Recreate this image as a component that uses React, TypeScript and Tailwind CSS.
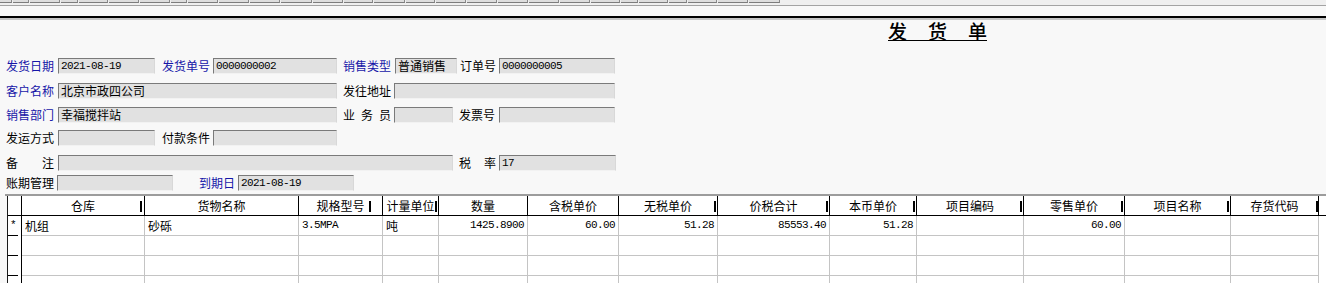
import React from 'react';

const CJK = "font-['Noto_Sans_CJK_SC',sans-serif]";
const MONO = "font-['Liberation_Mono',monospace] text-[11px] tracking-[-0.6px]";

// toolbar button widths (only the bottom edge of the toolbar is visible)
const toolButtons = [
  'w-[12px]', 'w-[16px]', 'w-[30px]', 'w-[17px]', 'w-[29px]', 'w-[30px]', 'w-[30px]', 'w-[16px]',
  'w-[30px]', 'w-[30px]', 'w-[30px]', 'w-[31px]', 'w-[30px]', 'w-[29px]', 'w-[31px]', 'w-[29px]',
  'w-[30px]', 'w-[30px]', 'w-[30px]', 'w-[30px]', 'w-[30px]', 'w-[29px]', 'w-[17px]', 'w-[29px]',
  'w-[18px]', 'w-[29px]', 'w-[30px]', 'w-[31px]',
];

type Col = { title: string; w: string; mark?: string };

const columns: Col[] = [
  { title: '仓库', w: 'w-[123px]', mark: 'right-[2px]' },
  { title: '货物名称', w: 'w-[154px]' },
  { title: '规格型号', w: 'w-[84px]', mark: 'right-[11px]' },
  { title: '计量单位', w: 'w-[56px]', mark: 'right-[1px]' },
  { title: '数量', w: 'w-[89px]' },
  { title: '含税单价', w: 'w-[91px]' },
  { title: '无税单价', w: 'w-[99px]', mark: 'right-[1px]' },
  { title: '价税合计', w: 'w-[112px]', mark: 'right-[1px]' },
  { title: '本币单价', w: 'w-[87px]', mark: 'right-[1px]' },
  { title: '项目编码', w: 'w-[107px]', mark: 'right-[1px]' },
  { title: '零售单价', w: 'w-[101px]', mark: 'right-[1px]' },
  { title: '项目名称', w: 'w-[106px]', mark: 'right-[1px]' },
  { title: '存货代码', w: 'w-[88px]', mark: 'right-[0px]' },
];

// first data row: [text, right aligned]
const firstRow: [string, boolean][] = [
  ['机组', false],
  ['砂砾', false],
  ['3.5MPA', false],
  ['吨', false],
  ['1425.8900', true],
  ['60.00', true],
  ['51.28', true],
  ['85553.40', true],
  ['51.28', true],
  ['', true],
  ['60.00', true],
  ['', false],
  ['', false],
];

function Label({ text, blue, className = '' }: { text: string; blue?: boolean; className?: string }) {
  return (
    <span
      className={`${CJK} text-[12px] leading-none whitespace-nowrap ${blue ? 'text-[#1616a8]' : 'text-black'} ${className}`}
    >
      {text}
    </span>
  );
}

function Box({ className = '', value, mono }: { className?: string; value?: string; mono?: boolean }) {
  return (
    <div
      className={`h-[16px] shrink-0 bg-[#e1e1e1] border border-t-[#7a7a7a] border-l-[#7a7a7a] border-r-[#d8d8d8] border-b-[#f2f2f2] flex items-center pl-[2px] overflow-hidden whitespace-nowrap text-black leading-none ${className}`}
    >
      {value && <span className={mono ? MONO : `${CJK} text-[12px]`}>{value}</span>}
    </div>
  );
}

export default function App() {
  return (
    <div className="w-[1326px] h-[283px] overflow-hidden bg-[#f8f8f8]">
      {/* toolbar remnant */}
      <div className="h-[5px] bg-[#efefef] flex items-start">
        {toolButtons.map((w, i) => (
          <div key={i} className={`${w} h-[3px] bg-[#dedede] border-b border-r border-b-[#7d7d7d] border-r-[#8a8a8a] mr-[1px]`} />
        ))}
      </div>
      <div className="h-px bg-[#a3a3a3]" />
      <div className="h-[10px]" />
      <div className="h-[2px] bg-black" />
      <div className="h-[2px] bg-[#c4c4c4]" />

      {/* title */}
      <div className="flex pl-[888px] pt-[1px]">
        <div className={`${CJK} flex gap-[21px] text-[19px] leading-[19px] font-medium text-black border-b border-black`}>
          <span>发</span>
          <span>货</span>
          <span>单</span>
        </div>
      </div>

      {/* form */}
      <div className="flex items-center h-[16px] mt-[17px]">
        <Label text="发货日期" blue className="ml-[6px] w-[52px]" />
        <Box className="w-[97px]" value="2021-08-19" mono />
        <Label text="发货单号" blue className="ml-[7px] w-[51px]" />
        <Box className="w-[124px]" value="0000000002" mono />
        <Label text="销售类型" blue className="ml-[6px] w-[52px]" />
        <Box className="w-[62px]" value="普通销售" />
        <Label text="订单号" className="ml-[3px] w-[39px]" />
        <Box className="w-[116px]" value="0000000005" mono />
      </div>

      <div className="flex items-center h-[16px] mt-[9px]">
        <Label text="客户名称" blue className="ml-[6px] w-[52px]" />
        <Box className="w-[279px]" value="北京市政四公司" />
        <Label text="发往地址" className="ml-[6px] w-[51px]" />
        <Box className="w-[221px]" />
      </div>

      <div className="flex items-center h-[16px] mt-[8px]">
        <Label text="销售部门" blue className="ml-[6px] w-[52px]" />
        <Box className="w-[279px]" value="幸福搅拌站" />
        <div className={`${CJK} ml-[6px] w-[51px] pr-[3px] flex justify-between text-[12px] leading-none text-black`}>
          <span>业</span>
          <span>务</span>
          <span>员</span>
        </div>
        <Box className="w-[59px]" />
        <Label text="发票号" className="ml-[6px] w-[40px]" />
        <Box className="w-[116px]" />
      </div>

      <div className="flex items-center h-[16px] mt-[7px]">
        <Label text="发运方式" className="ml-[6px] w-[52px]" />
        <Box className="w-[97px]" />
        <Label text="付款条件" className="ml-[7px] w-[51px]" />
        <Box className="w-[124px]" />
      </div>

      <div className="flex items-center h-[16px] mt-[9px]">
        <div className={`${CJK} ml-[6px] w-[52px] pr-[4px] flex justify-between text-[12px] leading-none text-black`}>
          <span>备</span>
          <span>注</span>
        </div>
        <Box className="w-[395px]" />
        <div className={`${CJK} ml-[6px] w-[40px] pr-[3px] flex justify-between text-[12px] leading-none text-black`}>
          <span>税</span>
          <span>率</span>
        </div>
        <Box className="w-[117px]" value="17" mono />
      </div>

      <div className="flex items-center h-[16px] mt-[4px]">
        <Label text="账期管理" className="ml-[6px] w-[51px]" />
        <Box className="w-[116px]" />
        <Label text="到期日" blue className="ml-[26px] w-[39px]" />
        <Box className="w-[116px]" value="2021-08-19" mono />
      </div>

      {/* grid */}
      <div className="mt-[3px] ml-[5px] border-t-2 border-t-[#9c9c9c] pl-[2px] h-[100px]">
        <div className="h-full bg-white border-l border-l-[#1a1a1a] overflow-hidden">
          {/* header */}
          <div className="flex h-[20px] border-b border-b-black">
            <div className="w-[14px] shrink-0 border-r border-r-black" />
            {columns.map((c) => (
              <div
                key={c.title}
                className={`${c.w} shrink-0 relative border-r border-r-black flex items-center justify-center ${CJK} text-[12px] leading-none text-black`}
              >
                {c.title}
                {c.mark && <span className={`absolute ${c.mark} top-[5px] h-[11px] w-[2px] bg-black`} />}
              </div>
            ))}
          </div>

          {/* data rows */}
          {[0, 1, 2, 3].map((r) => (
            <div key={r} className="flex h-[20px]">
              <div className="w-[14px] shrink-0 border-r border-r-black flex flex-col">
                <div className="flex-1 flex items-center pl-[2px] font-['Liberation_Mono',monospace] text-[11px] text-black">
                  {r === 0 ? '*' : ''}
                </div>
                <div className="h-px w-[10px] bg-black" />
              </div>
              {columns.map((c, i) => {
                const [text, numeric] = r === 0 ? firstRow[i] : ['', false];
                const isAscii = /^[0-9A-Za-z.]+$/.test(text);
                return (
                  <div
                    key={c.title}
                    className={`${c.w} shrink-0 border-r border-b border-[#c4c4c4] flex items-center overflow-hidden whitespace-nowrap text-black leading-none ${
                      numeric ? 'justify-end pr-[3px]' : 'pl-[3px]'
                    } ${isAscii ? MONO : `${CJK} text-[12px]`}`}
                  >
                    {text}
                  </div>
                );
              })}
            </div>
          ))}
        </div>
      </div>
    </div>
  );
}
